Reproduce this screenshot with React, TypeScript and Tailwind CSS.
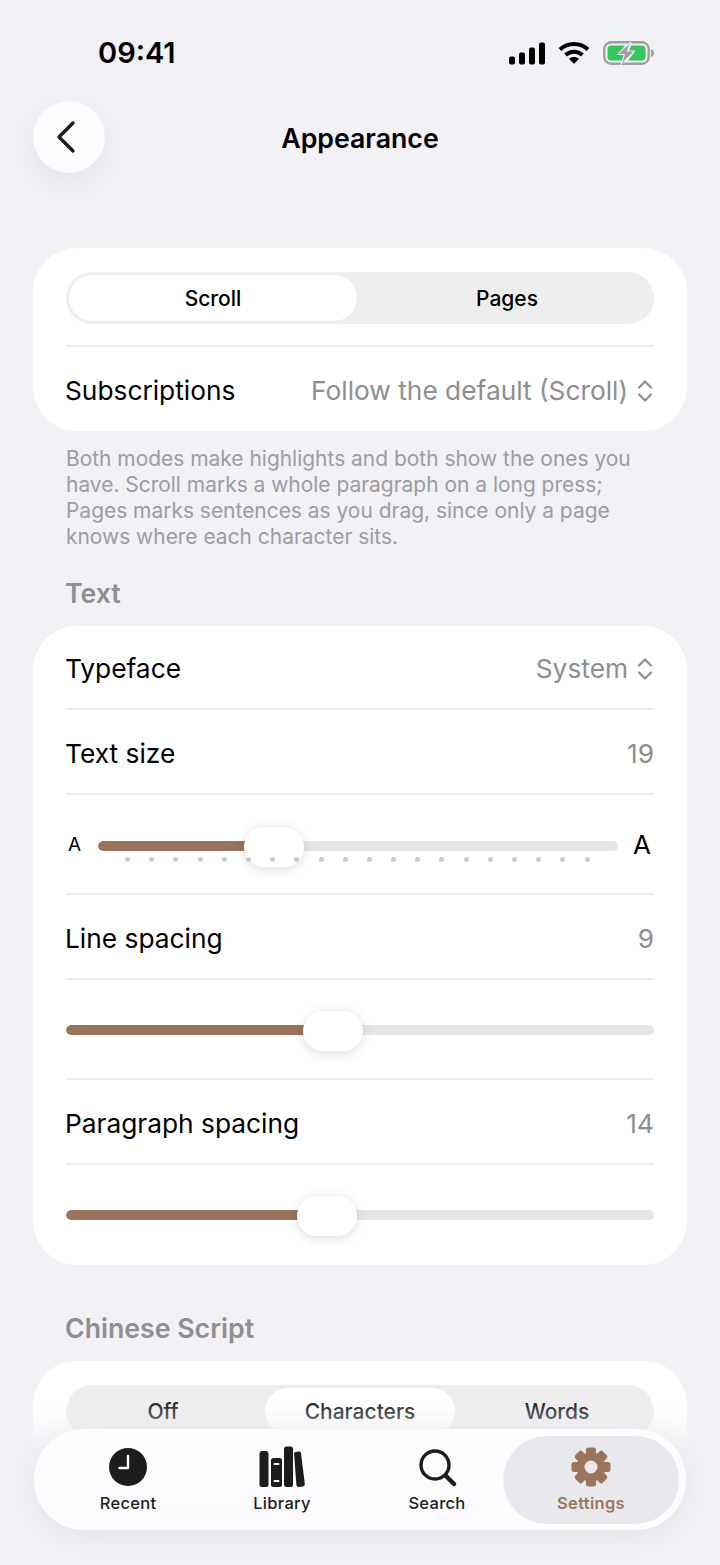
import React from 'react';

const dots = Array.from({ length: 20 }, (_, i) => i);
const teeth = [0, 45, 90, 135, 180, 225, 270, 315];

function Divider() {
    return <div className="h-[2px] bg-[#ededee]" />;
}

function UpDown() {
    return (
        <svg width="16" height="26" viewBox="0 0 16 26" fill="none" stroke="#8e8e90" strokeWidth="2.2" strokeLinecap="round" strokeLinejoin="round" className="mr-[1px]">
            <path d="M2 9.5 8 3.5l6 6" />
            <path d="M2 16.5l6 6 6-6" />
        </svg>
    );
}

function Row({ label, value }: { label: string; value: string }) {
    return (
        <div className="h-[83px] pt-[4px] flex items-center justify-between text-[26.3px]">
            <span className="text-black -ml-[1px]">{label}</span>
            <span className="text-[#8e8e90]">{value}</span>
        </div>
    );
}

function Slider({ fill, thumb }: { fill: string; thumb: string }) {
    return (
        <div className="relative h-[10px]">
            <div className="h-full rounded-full bg-[#e6e6e6] overflow-hidden">
                <div className={`h-full rounded-full bg-[#9c745c] ${fill}`} />
            </div>
            <div className={`absolute top-[-14px] w-[60px] h-[40px] rounded-full bg-white shadow-[0_2px_12px_rgba(0,0,0,0.14)] ${thumb}`} />
        </div>
    );
}

function StatusIcons() {
    return (
        <div className="flex items-center gap-[13px]">
            <svg width="36" height="23" viewBox="0 0 36 23" fill="#000">
                <rect x="0" y="14.5" width="6" height="8" rx="2" />
                <rect x="10" y="10.5" width="6" height="12" rx="2" />
                <rect x="20" y="5.5" width="6" height="17" rx="2" />
                <rect x="30" y="0.5" width="6" height="22" rx="2" />
            </svg>
            <svg width="32" height="24" viewBox="0 0 32 24" fill="none" stroke="#000" strokeWidth="4">
                <path d="M2 8.5C9.8 1 22.2 1 30 8.5" />
                <path d="M7.6 14C12.4 9.6 19.6 9.6 24.4 14" />
                <path d="M16 23l-5-5.2c2.8-2.3 7.2-2.3 10 0z" fill="#000" stroke="none" />
            </svg>
            <svg width="51" height="24" viewBox="0 0 51 24">
                <rect x="1.2" y="1.2" width="44.6" height="21.6" rx="7" fill="none" stroke="#a0a0a0" strokeWidth="2.4" />
                <path d="M48 8c2 .4 3 2 3 4s-1 3.6-3 4z" fill="#a0a0a0" />
                <path d="M8 4.5h14l-7 9h6l-2 6H8a3.5 3.5 0 0 1-3.5-3.5V8A3.5 3.5 0 0 1 8 4.5z" fill="#34c759" />
                <path d="M28 4.5h11a3.5 3.5 0 0 1 3.5 3.5v8a3.5 3.5 0 0 1-3.5 3.5H25l7-9h-6z" fill="#34c759" />
                <path d="M28 1 14 13.5h7.5l-3.500 10 13.500-13.500h-7.500z" fill="#a0a0a0" stroke="#f1f1f6" strokeWidth="1" />
            </svg>
        </div>
    );
}

function TabBar() {
    return (
        <div className="absolute left-[34px] top-[1429px] w-[652px] h-[101px] rounded-[50px] bg-[#fcfcfe] shadow-[0_6px_30px_rgba(0,0,0,0.06)] flex items-center px-[7px]">
            <div className="absolute left-[124px] top-[74px] w-[110px] h-[18px] bg-[#f8f8fb] blur-[4px]" />
            <div className="relative shrink-0 w-[174px] flex flex-col items-center gap-[5px] text-[#1c1c1e]">
                <svg width="42" height="42" viewBox="0 0 42 42">
                    <circle cx="21" cy="21" r="19" fill="#1c1c1e" />
                    <path d="M21 10v12h-8.5" fill="none" stroke="#fff" strokeWidth="2.4" strokeLinecap="round" strokeLinejoin="round" />
                </svg>
                <span className="text-[16.5px] leading-[20px] font-medium tracking-[0.3px]">Recent</span>
            </div>
            <div className="relative shrink-0 w-[134px] flex flex-col items-center gap-[5px] text-[#1c1c1e]">
                <svg width="46" height="42" viewBox="0 0 46 42" fill="#1c1c1e">
                    <rect x="0.5" y="5" width="9" height="36" rx="2.5" />
                    <rect x="12" y="12" width="11" height="29" rx="2.5" />
                    <rect x="25" y="0.5" width="9" height="40.5" rx="2.5" />
                    <path d="M35 6.5 39.5 5.5c1.3-.2 2.3.5 2.5 1.8l3.800 30.500c.2 1.400-.6 2.400-1.900 2.700l-4 .5c-1.300.1-2.300-.6-2.500-1.900z" />
                    <rect x="14.5" y="17" width="6" height="2" rx="1" fill="#fcfcfe" />
                    <rect x="14.5" y="34" width="6" height="2" rx="1" fill="#fcfcfe" />
                </svg>
                <span className="text-[16.5px] leading-[20px] font-medium tracking-[0.3px]">Library</span>
            </div>
            <div className="relative shrink-0 ml-[22px] w-[132px] flex flex-col items-center gap-[5px] text-[#1c1c1e]">
                <svg width="42" height="42" viewBox="0 0 42 42" fill="none" stroke="#1c1c1e" strokeWidth="3.4" strokeLinecap="round">
                    <circle cx="19" cy="19" r="14" />
                    <path d="M29.5 29.5 38 38" strokeWidth="4.5" />
                </svg>
                <span className="text-[16.5px] leading-[20px] font-medium tracking-[0.3px]">Search</span>
            </div>
            <div className="relative shrink-0 w-[176px] h-[88px] rounded-[44px] bg-[#e9e9ed] flex flex-col items-center justify-center gap-[5px] text-[#9c745c]">
                <svg width="42" height="42" viewBox="0 0 42 42">
                    <g fill="#9c745c">
                        {teeth.map((deg) => (
                            <rect key={deg} x="16" y="1.5" width="10" height="10" rx="2.5" transform={`rotate(${deg} 21 21)`} />
                        ))}
                    </g>
                    <circle cx="21" cy="21" r="10.5" fill="none" stroke="#9c745c" strokeWidth="8" />
                </svg>
                <span className="text-[16.5px] leading-[20px] font-semibold tracking-[0.3px]">Settings</span>
            </div>
        </div>
    );
}

export default function App() {
    return (
        <div className="relative w-[720px] h-[1565px] overflow-hidden bg-[#f1f1f6] font-['Inter',sans-serif]">
            <div className="h-[101px] pl-[98px] pr-[66px] pt-[35px] flex items-start justify-between">
                <span className="text-[29px] leading-[36px] font-semibold text-black">09:41</span>
                <div className="pt-[6px]">
                    <StatusIcons />
                </div>
            </div>

            <div className="relative h-[72px] px-[33px] pt-[1px] flex items-center justify-center">
                <div className="absolute left-[33px] top-0 w-[72px] h-[72px] rounded-full bg-[#fbfbfd] shadow-[0_10px_30px_rgba(0,0,0,0.06)] flex items-center justify-center">
                    <svg width="22" height="34" viewBox="0 0 22 34" fill="none" stroke="#1c1c1e" strokeWidth="3.4" strokeLinecap="round" strokeLinejoin="round" className="mr-[7px]">
                        <path d="M18 3 4 17l14 14" />
                    </svg>
                </div>
                <h1 className="text-[26.7px] leading-[34px] font-semibold text-black">Appearance</h1>
            </div>

            <div className="px-[33px] pt-[75px]">
                <div className="rounded-[44px] bg-white px-[33px] pt-[24px] h-[183px]">
                    <div className="h-[52px] rounded-full bg-[#eeeeef] p-[3px] grid grid-cols-[288px_1fr] text-[21px] font-medium text-black">
                        <div className="pt-[1px] rounded-full bg-white flex items-center justify-center">Scroll</div>
                        <div className="pt-[1px] pl-[6px] flex items-center justify-center">Pages</div>
                    </div>
                    <div className="mt-[21px]">
                        <Divider />
                    </div>
                    <div className="h-[86px] pt-[2px] flex items-center justify-between text-[26.3px]">
                        <span className="text-black -ml-[1px]">Subscriptions</span>
                        <span className="flex items-center gap-[9px] text-[#8e8e90]">
                            Follow the default (Scroll)
                            <UpDown />
                        </span>
                    </div>
                </div>

                <p className="px-[33px] pt-[15px] text-[20.95px] leading-[26px] text-[#9c9ca1]">
                    Both modes make highlights and both show the ones you have. Scroll marks a whole paragraph on a long press; Pages marks sentences as you drag, since only a page knows where each character sits.
                </p>

                <h2 className="pl-[32px] pt-[26px] pb-[16px] text-[26.7px] leading-[34px] font-semibold text-[#8e8e93]">Text</h2>

                <div className="rounded-[44px] bg-white px-[33px] h-[639px]">
                    <div className="h-[82px] pt-[4px] flex items-center justify-between text-[26.3px]">
                        <span className="text-black -ml-[1px]">Typeface</span>
                        <span className="flex items-center gap-[9px] text-[#8e8e90]">
                            System
                            <UpDown />
                        </span>
                    </div>
                    <Divider />
                    <Row label="Text size" value="19" />
                    <Divider />
                    <div className="h-[98px] flex items-start pt-[35px]">
                        <span className="w-[32px] text-[19px] leading-[32px] pl-[2px] text-black -mt-[1px]">A</span>
                        <div className="relative flex-1 mt-[11px]">
                            <Slider fill="w-[190px]" thumb="left-[146px]" />
                            <div className="absolute left-[27px] top-[16px] flex gap-[19.2px]">
                                {dots.map((d) => (
                                    <div key={d} className="w-[5px] h-[5px] rounded-full bg-[#cacaca]" />
                                ))}
                            </div>
                        </div>
                        <span className="w-[36px] pr-[3px] text-right text-[26px] leading-[32px] text-black -mt-[1px]">A</span>
                    </div>
                    <Divider />
                    <Row label="Line spacing" value="9" />
                    <Divider />
                    <div className="h-[98px] pt-[45px]">
                        <Slider fill="w-[267px]" thumb="left-[237px]" />
                    </div>
                    <Divider />
                    <Row label="Paragraph spacing" value="14" />
                    <Divider />
                    <div className="pt-[45px]">
                        <Slider fill="w-[260px]" thumb="left-[231px]" />
                    </div>
                </div>

                <h2 className="pl-[32px] pt-[46px] pb-[16px] text-[26.7px] leading-[34px] font-semibold text-[#8e8e93]">Chinese Script</h2>

                <div className="rounded-[44px] bg-white px-[33px] pt-[24px] h-[300px]">
                    <div className="h-[52px] rounded-full bg-[#eeeeef] p-[3px] grid grid-cols-[1fr_190px_1fr] text-[21px] font-medium text-[#2c2c2e]">
                        <div className="pt-[1px] pr-[8px] flex items-center justify-center">Off</div>
                        <div className="pt-[1px] rounded-full bg-white flex items-center justify-center">Characters</div>
                        <div className="pt-[1px] pl-[8px] flex items-center justify-center">Words</div>
                    </div>
                </div>
            </div>

            <div className="absolute left-0 top-[1405px] w-[720px] h-[160px] bg-gradient-to-b from-[#f1f1f6]/0 via-[#f1f1f6] via-[30%] to-[#f1f1f6]" />
            <TabBar />
        </div>
    );
}
